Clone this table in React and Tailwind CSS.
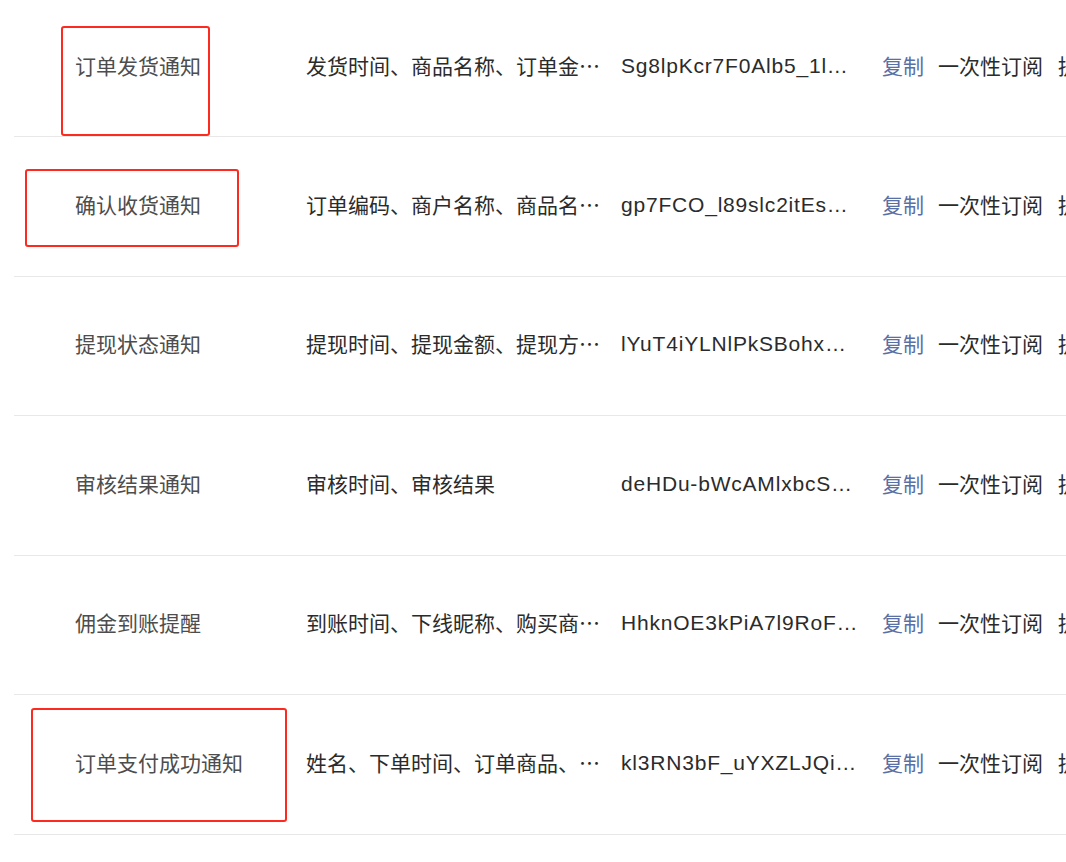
import React from "react";

const rows = [
  { name: "订单发货通知", keys: "发货时间、商品名称、订单金额、收货地址", id: "Sg8lpKcr7F0Alb5_1lQxWqB9kRz", h: "h-[137px]" },
  { name: "确认收货通知", keys: "订单编码、商户名称、商品名称、收货时间", id: "gp7FCO_l89slc2itEsQwYkD3nP", h: "h-[140px]" },
  { name: "提现状态通知", keys: "提现时间、提现金额、提现方式、提现状态", id: "lYuT4iYLNlPkSBohxM2aVc8e", h: "h-[139px]" },
  { name: "审核结果通知", keys: "审核时间、审核结果", id: "deHDu-bWcAMlxbcSqT7uLmZ0", h: "h-[140px]" },
  { name: "佣金到账提醒", keys: "到账时间、下线昵称、购买商品、佣金金额", id: "HhknOE3kPiA7l9RoFs1XbW4y", h: "h-[139px]" },
  { name: "订单支付成功通知", keys: "姓名、下单时间、订单商品、订单金额", id: "kl3RN3bF_uYXZLJQiHd6Vt2g", h: "h-[140px]" },
];

function Row({ row }) {
  return (
    <div className={`flex items-center pb-[4px] border-b border-[#e8e8e8] whitespace-nowrap ${row.h}`}>
      <div className="w-[292px] shrink-0 pl-[61px] text-[#4d4d4d]">{row.name}</div>
      <div className="w-[315px] shrink-0 pr-[15px] truncate text-[#2b2b2b]">{row.keys}</div>
      <div className="w-[261px] shrink-0 pr-[21px] truncate text-[#2b2b2b] tracking-[0.8px] font-['Liberation_Sans','Noto_Sans_CJK_SC',sans-serif]">
        {row.id}
      </div>
      <button className="w-[56px] shrink-0 text-left text-[#5a6fa3]">复制</button>
      <div className="w-[120px] shrink-0 text-[#2b2b2b]">一次性订阅</div>
      <div className="shrink-0 text-[#2b2b2b]">提交</div>
    </div>
  );
}

export default function App() {
  return (
    <div className="relative w-full h-[862px] overflow-hidden bg-white font-['Noto_Sans_CJK_SC',sans-serif] text-[21px] leading-[1.5]">
      <div className="pl-[14px]">
        {rows.map((row) => (
          <Row key={row.id} row={row} />
        ))}
      </div>

      {/* annotation boxes */}
      <div className="absolute left-[61px] top-[26px] w-[149px] h-[110px] border-2 border-[#ff2a1f] rounded-[3px]" />
      <div className="absolute left-[25px] top-[169px] w-[214px] h-[78px] border-2 border-[#ff2a1f] rounded-[3px]" />
      <div className="absolute left-[31px] top-[708px] w-[256px] h-[114px] border-2 border-[#ff2a1f] rounded-[3px]" />
    </div>
  );
}
